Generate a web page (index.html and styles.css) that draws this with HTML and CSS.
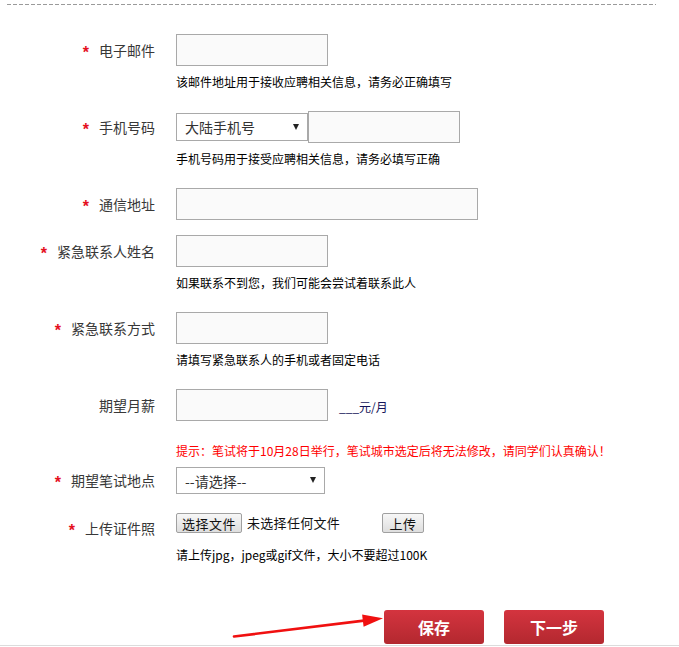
FILE: index.html
```html
<!DOCTYPE html>
<html lang="zh-CN">
<head>
<meta charset="utf-8">
<title>个人信息</title>
<link rel="stylesheet" href="styles.css">
</head>
<body>
<div class="page">
  <div class="dash"></div>
  <form class="form">
    <div class="row">
      <div class="label"><span class="req">*</span>电子邮件</div>
      <div class="ctrl">
        <div class="line"><input class="txt" type="text"></div>
        <p class="hint">该邮件地址用于接收应聘相关信息，请务必正确填写</p>
      </div>
    </div>
    <div class="row">
      <div class="label"><span class="req">*</span>手机号码</div>
      <div class="ctrl">
        <div class="line">
          <span class="sel sel-phone"><select><option>大陆手机号</option></select></span>
          <input class="txt" type="text">
        </div>
        <p class="hint">手机号码用于接受应聘相关信息，请务必填写正确</p>
      </div>
    </div>
    <div class="row">
      <div class="label"><span class="req">*</span>通信地址</div>
      <div class="ctrl">
        <div class="line"><input class="txt wide" type="text"></div>
      </div>
    </div>
    <div class="row">
      <div class="label"><span class="req">*</span>紧急联系人姓名</div>
      <div class="ctrl">
        <div class="line"><input class="txt" type="text"></div>
        <p class="hint">如果联系不到您，我们可能会尝试着联系此人</p>
      </div>
    </div>
    <div class="row">
      <div class="label"><span class="req">*</span>紧急联系方式</div>
      <div class="ctrl">
        <div class="line"><input class="txt" type="text"></div>
        <p class="hint">请填写紧急联系人的手机或者固定电话</p>
      </div>
    </div>
    <div class="row">
      <div class="label">期望月薪</div>
      <div class="ctrl">
        <div class="line"><input class="txt" type="text"><span class="unit">___元/月</span></div>
      </div>
    </div>
    <p class="tip">提示：笔试将于10月28日举行，笔试城市选定后将无法修改，请同学们认真确认！</p>
    <div class="row row-city">
      <div class="label"><span class="req">*</span>期望笔试地点</div>
      <div class="ctrl">
        <div class="line"><span class="sel sel-city"><select><option>--请选择--</option></select></span></div>
      </div>
    </div>
    <div class="row row-last">
      <div class="label"><span class="req">*</span>上传证件照</div>
      <div class="ctrl">
        <div class="line line-file">
          <button type="button" class="fbtn">选择文件</button>
          <span class="fname">未选择任何文件</span>
          <button type="button" class="fbtn upload">上传</button>
        </div>
        <p class="hint hint-file">请上传jpg，jpeg或gif文件，大小不要超过100K</p>
      </div>
    </div>
  </form>
  <div class="actions">
    <button type="button" class="btn">保存</button>
    <button type="button" class="btn">下一步</button>
  </div>
  <div class="bottom"></div>
  <svg class="arrow" width="679" height="647" viewBox="0 0 679 647">
    <line x1="234" y1="636.5" x2="366" y2="620.4" stroke="#f01010" stroke-width="2.6" stroke-linecap="round"/>
    <polygon points="383,618.3 362.1,614.5 363.6,626.8" fill="#f01010"/>
  </svg>
</div>
</body>
</html>
```
FILE: styles.css
```css
html, body {
  margin: 0;
  padding: 0;
  background: #fff;
}
body {
  font-family: "Noto Sans CJK SC", "Noto Sans", sans-serif;
}
.page {
  position: relative;
  width: 679px;
  height: 647px;
  overflow: hidden;
}
.dash {
  margin: 4px 0 0 7px;
  width: 649px;
  height: 1px;
  background: repeating-linear-gradient(to right, #9a9a9a 0 4px, transparent 4px 6px);
}
.form {
  margin: 29px 0 0;
  display: flex;
  flex-direction: column;
}
.row {
  display: flex;
  margin-bottom: 15px;
}
.row-city {
  margin-bottom: 16px;
}
.row-last {
  margin-bottom: 0;
}
.label {
  width: 155px;
  margin-right: 21px;
  height: 32px;
  display: flex;
  align-items: center;
  justify-content: flex-end;
  font-size: 14px;
  line-height: 16px;
  color: #383838;
  white-space: nowrap;
}
.req {
  color: #e5101e;
  font: bold 16px/16px "Liberation Sans", sans-serif;
  margin-right: 10px;
  padding-top: 6px;
}
.line {
  display: flex;
  align-items: center;
  height: 32px;
}
.txt {
  width: 152px;
  height: 32px;
  box-sizing: border-box;
  margin: 0;
  padding: 0 6px;
  border: 1px solid #a9a9a9;
  background: #fafafa;
  outline: none;
}
.txt.wide {
  width: 302px;
}
.hint {
  margin: 7px 0 5px;
  font-size: 12px;
  line-height: 18px;
  color: #000;
  white-space: nowrap;
}
.hint-file {
  margin-top: 2px;
}
.unit {
  margin-left: 11px;
  font-size: 12px;
  color: #14145a;
  line-height: 16px;
  padding-top: 3px;
}
.tip {
  margin: 6px 0 4px 176px;
  font-size: 12px;
  line-height: 18px;
  color: #f00;
  white-space: nowrap;
}
.sel {
  position: relative;
  display: block;
  box-sizing: border-box;
  border: 1px solid #a9a9a9;
  background: #fff;
}
.sel select {
  appearance: none;
  -webkit-appearance: none;
  border: none;
  background: transparent;
  width: 100%;
  height: 100%;
  margin: 0;
  padding: 0 0 0 8px;
  font-family: "Noto Sans CJK SC", sans-serif;
  font-size: 14px;
  color: #333;
  outline: none;
}
.sel::after {
  content: "";
  position: absolute;
  right: 8px;
  top: 50%;
  margin-top: -3px;
  border-left: 3.5px solid transparent;
  border-right: 3.5px solid transparent;
  border-top: 6px solid #222;
}
.sel-phone {
  width: 132px;
  height: 28px;
}
.sel-city {
  width: 149px;
  height: 27px;
}
.line-file {
  align-items: flex-start;
}
.fbtn {
  margin: 1px 0 0;
  height: 20px;
  box-sizing: border-box;
  padding: 0 5px;
  border: 1px solid #a0a0a0;
  border-radius: 2px;
  background: linear-gradient(#f7f7f7, #dedede);
  font-family: "Noto Sans CJK SC", sans-serif;
  font-size: 13px;
  line-height: 17px;
  color: #111;
  letter-spacing: 0.5px;
}
.fname {
  margin: 1px 0 0 5px;
  font-size: 13px;
  line-height: 20px;
  color: #111;
  letter-spacing: 0.3px;
}
.upload {
  margin-left: 42px;
  width: 42px;
}
.actions {
  display: flex;
  gap: 20px;
  margin-top: 41px;
  padding-left: 384px;
}
.btn {
  width: 100px;
  height: 34px;
  margin: 0;
  padding: 0;
  border: none;
  border-radius: 3px;
  background: linear-gradient(#d4343f, #b3282f);
  color: #fff;
  font-family: "Noto Sans CJK SC", sans-serif;
  font-weight: bold;
  font-size: 16px;
  line-height: 34px;
}
.bottom {
  margin-top: 1px;
  height: 1px;
  background: #dcdcdc;
}
.arrow {
  position: absolute;
  left: 0;
  top: 0;
  pointer-events: none;
}
```
